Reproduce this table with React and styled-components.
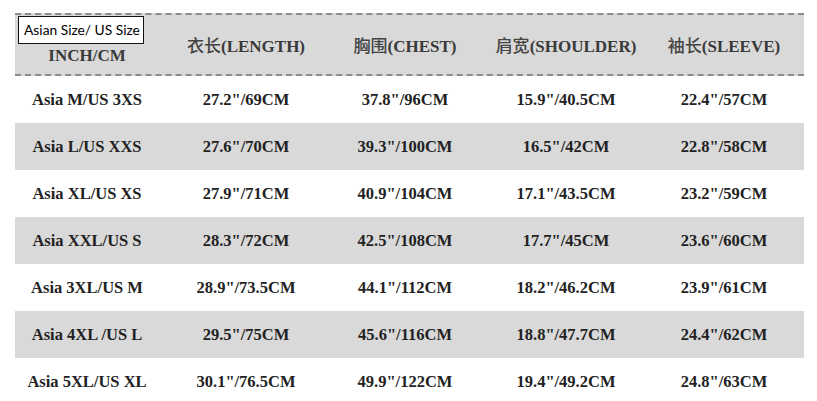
import React from "react";
import styled, { createGlobalStyle } from "styled-components";

const GlobalStyle = createGlobalStyle`
  body {
    margin: 0;
    background: #ffffff;
  }
`;

const columns = "144px 174px 144px 178px 138px";

const Page = styled.div`
  padding: 13px 0 0 15px;
  width: 817px;
  height: 401px;
  box-sizing: border-box;
  overflow: hidden;
`;

const Table = styled.div`
  position: relative;
  width: 789px;
`;

const HeaderRow = styled.div`
  display: grid;
  grid-template-columns: ${columns};
  height: 59px;
  background: #d9d9d9;
  border-top: 2px dashed #8c8c8c;
  border-bottom: 2px dashed #8c8c8c;
  align-items: center;
`;

const HeadCell = styled.div`
  text-align: center;
  font-family: "Liberation Serif", "Noto Sans CJK SC", serif;
  font-weight: bold;
  font-size: 17px;
  color: #3a3a3a;
  padding-top: ${(p) => (p.$low ? "22px" : "0")};
`;

const Han = styled.span`
  font-family: "Noto Sans CJK SC", sans-serif;
  font-weight: 500;
  color: #444;
`;

const Row = styled.div`
  display: grid;
  grid-template-columns: ${columns};
  height: 47px;
  align-items: center;
  background: ${(p) => (p.$shaded ? "#d9d9d9" : "#ffffff")};
`;

const Cell = styled.div`
  text-align: center;
  font-family: "Liberation Serif", serif;
  font-weight: bold;
  font-size: 16.5px;
  color: #222;
  white-space: nowrap;
`;

const SizeTag = styled.div`
  position: absolute;
  left: 3px;
  top: 3px;
  padding: 4px 3px 4px 5px;
  background: #ffffff;
  border: 1px solid #111;
  font-family: "Lato", "Liberation Sans", sans-serif;
  font-size: 13.8px;
  color: #000;
  line-height: 18px;
`;

const rows = [
  ["Asia M/US 3XS", '27.2"/69CM', '37.8"/96CM', '15.9"/40.5CM', '22.4"/57CM'],
  ["Asia L/US XXS", '27.6"/70CM', '39.3"/100CM', '16.5"/42CM', '22.8"/58CM'],
  ["Asia XL/US XS", '27.9"/71CM', '40.9"/104CM', '17.1"/43.5CM', '23.2"/59CM'],
  ["Asia XXL/US S", '28.3"/72CM', '42.5"/108CM', '17.7"/45CM', '23.6"/60CM'],
  ["Asia 3XL/US M", '28.9"/73.5CM', '44.1"/112CM', '18.2"/46.2CM', '23.9"/61CM'],
  ["Asia 4XL /US L", '29.5"/75CM', '45.6"/116CM', '18.8"/47.7CM', '24.4"/62CM'],
  ["Asia 5XL/US XL", '30.1"/76.5CM', '49.9"/122CM', '19.4"/49.2CM', '24.8"/63CM'],
];

const headers = [
  ["衣长", "(LENGTH)"],
  ["胸围", "(CHEST)"],
  ["肩宽", "(SHOULDER)"],
  ["袖长", "(SLEEVE)"],
];

export default function App() {
  return (
    <Page>
      <GlobalStyle />
      <Table>
        <HeaderRow>
          <HeadCell $low>INCH/CM</HeadCell>
          {headers.map(([han, en]) => (
            <HeadCell key={en}>
              <Han>{han}</Han>
              {en}
            </HeadCell>
          ))}
        </HeaderRow>
        {rows.map((r, i) => (
          <Row key={r[0]} $shaded={i % 2 === 1}>
            {r.map((v, j) => (
              <Cell key={j}>{v}</Cell>
            ))}
          </Row>
        ))}
        <SizeTag>Asian Size/ US Size</SizeTag>
      </Table>
    </Page>
  );
}
